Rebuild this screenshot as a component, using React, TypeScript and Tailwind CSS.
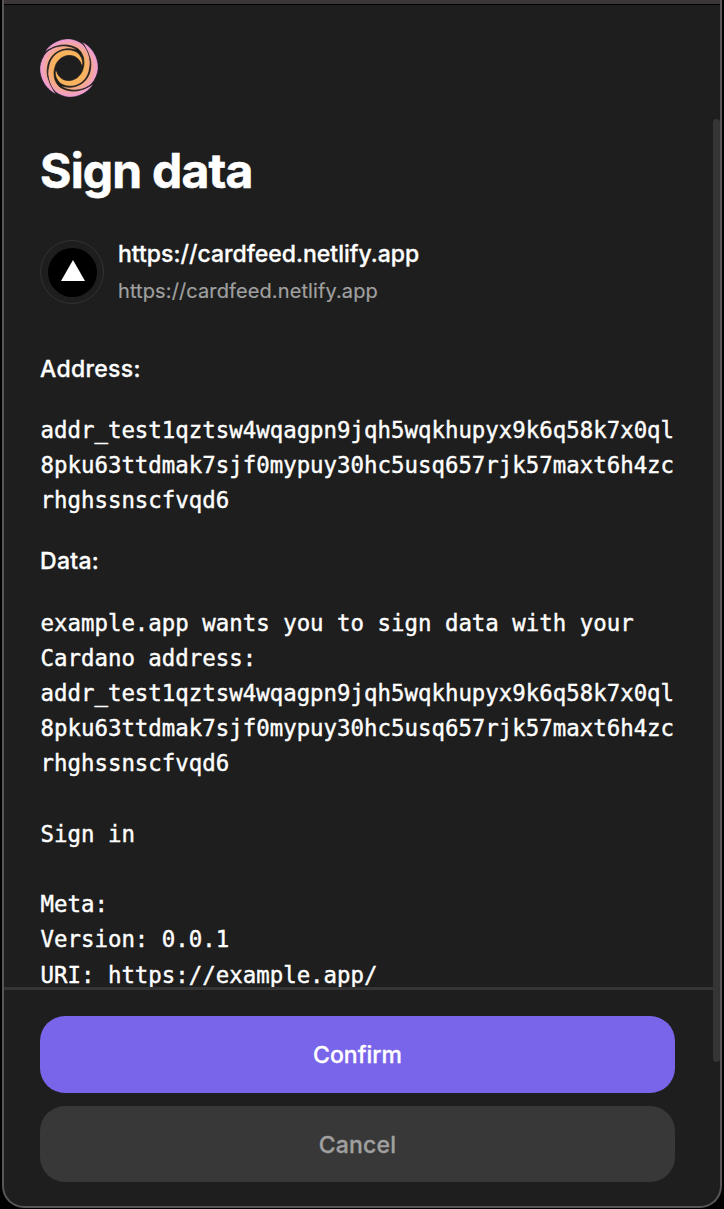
import React from "react";

const ADDRESS = [
  "addr_test1qztsw4wqagpn9jqh5wqkhupyx9k6q58k7x0ql",
  "8pku63ttdmak7sjf0mypuy30hc5usq657rjk57maxt6h4zc",
  "rhghssnscfvqd6",
].join("\n");

const PAYLOAD = `example.app wants you to sign data with your
Cardano address:
${ADDRESS}

Sign in

Meta:
Version: 0.0.1
URI: https://example.app/`;

type Profile = [angle: number, outer: number, inner: number][];

const LONG_ARM: Profile = [
  [0, 87, 85],
  [12, 87, 79],
  [30, 87, 73],
  [55, 87, 67],
  [83, 82, 62],
  [100, 76, 56],
  [122, 67, 48],
  [145, 61, 42],
  [180, 58, 38],
  [210, 56, 37],
  [235, 54, 37],
  [265, 52, 38],
  [290, 47, 38],
  [320, 40, 38],
];

const SHORT_ARM: Profile = [
  [0, 87, 85],
  [12, 87, 77],
  [30, 87, 70],
  [62, 87, 64],
  [97, 82, 61],
  [127, 71, 58],
  [152, 64, 57],
  [180, 58, 57],
];

function armPath(profile: Profile) {
  const at = (angle: number, r: number) => {
    const a = (angle * Math.PI) / 180;
    return `${(r * Math.cos(a)).toFixed(1)} ${(r * Math.sin(a)).toFixed(1)}`;
  };
  const sample = (edge: 1 | 2) => {
    const points: string[] = [];
    for (let i = 0; i < profile.length - 1; i++) {
      const [a, b] = [profile[i], profile[i + 1]];
      for (let k = 0; k < 4; k++) {
        const t = k / 4;
        points.push(at(a[0] + (b[0] - a[0]) * t, a[edge] + (b[edge] - a[edge]) * t));
      }
    }
    return points;
  };
  return `M${[...sample(1), ...sample(2).reverse()].join("L")}Z`;
}

function Logo() {
  return (
    <svg viewBox="-86 -86 172 172" className="block size-[58px]">
      <defs>
        <radialGradient id="swirl" gradientUnits="userSpaceOnUse" cx="0" cy="0" r="86">
          <stop offset="0.58" stopColor="#f9b35c" />
          <stop offset="0.74" stopColor="#f6a988" />
          <stop offset="1" stopColor="#ef9ddb" />
        </radialGradient>
      </defs>
      <g fill="url(#swirl)" stroke="#1e1e1e" strokeWidth="2">
        {[-145, 35].map((angle) => (
          <path key={angle} transform={`rotate(${angle})`} d={armPath(LONG_ARM)} />
        ))}
        {[-62, 118].map((angle) => (
          <path key={angle} transform={`rotate(${angle})`} d={armPath(SHORT_ARM)} />
        ))}
      </g>
    </svg>
  );
}

export default function App() {
  return (
    <div className="relative flex h-[1209px] w-[724px] flex-col bg-black pr-0.5 pb-px pl-0.5 font-['Inter',sans-serif] text-white">
      <div className="relative flex min-h-0 grow flex-col overflow-hidden rounded-b-[22px] border-x-2 border-b-2 border-[#575757] bg-[#1e1e1e]">
        <div className="h-[5px] shrink-0 border-b border-black bg-[#3c3736]" />
        <main className="h-[982px] shrink-0 overflow-hidden px-9 pt-[34px]">
          <Logo />
          <h1 className="mt-[44px] h-[60px] text-[48px] leading-[60px] font-bold tracking-[-0.8px] whitespace-nowrap [-webkit-text-stroke:0.6px]">
            Sign data
          </h1>
          <div className="mt-[39px] flex h-16 items-center gap-[14px]">
            <div className="flex size-16 shrink-0 items-center justify-center rounded-full border border-[#333333]">
              <div className="flex size-[49px] items-center justify-center rounded-full bg-black">
                <svg viewBox="0 0 24 21" className="mb-[3px] ml-px h-[21px] w-6 fill-white">
                  <path d="M12 0 24 21H0Z" />
                </svg>
              </div>
            </div>
            <div className="pt-0.5 whitespace-nowrap">
              <p className="text-[23px] leading-9 font-medium [-webkit-text-stroke:0.3px]">https://cardfeed.netlify.app</p>
              <p className="text-[20px] leading-[38px] tracking-[0.11px] text-[#a0a0a0] [-webkit-text-stroke:0.2px]">
                https://cardfeed.netlify.app
              </p>
            </div>
          </div>
          <h2 className="mt-[47px] text-[23px] leading-9 font-medium tracking-[0.3px] [-webkit-text-stroke:0.3px]">Address:</h2>
          <pre className="mt-[26px] ml-[0.5px] font-['DejaVu_Sans_Mono',monospace] text-[22.4px] leading-[35.2px] [-webkit-text-stroke:0.4px]">
            {ADDRESS}
          </pre>
          <h2 className="mt-6 text-[23px] leading-9 font-medium tracking-[0.3px] [-webkit-text-stroke:0.3px]">Data:</h2>
          <pre className="mt-[27px] ml-[0.5px] font-['DejaVu_Sans_Mono',monospace] text-[22.4px] leading-[35.2px] [-webkit-text-stroke:0.4px]">
            {PAYLOAD}
          </pre>
        </main>
        <footer className="flex grow flex-col gap-[13px] px-9 pt-[29px]">
          <button className="h-[77px] w-[635px] shrink-0 rounded-[25px] bg-[#7965e9] pt-0.5 text-[23px] font-medium [-webkit-text-stroke:0.3px]">
            Confirm
          </button>
          <button className="h-[76px] w-[635px] shrink-0 rounded-[25px] bg-[#383838] pt-0.5 text-[23px] font-medium tracking-[0.2px] text-[#a0a0a0] [-webkit-text-stroke:0.3px]">
            Cancel
          </button>
        </footer>
        <div className="absolute top-[987px] left-0 h-[3px] w-[709px] bg-[#353535]" />
        <div className="absolute top-[119px] right-0 h-[943px] w-[7px] rounded-[4px] bg-[#353535]" />
      </div>
    </div>
  );
}
